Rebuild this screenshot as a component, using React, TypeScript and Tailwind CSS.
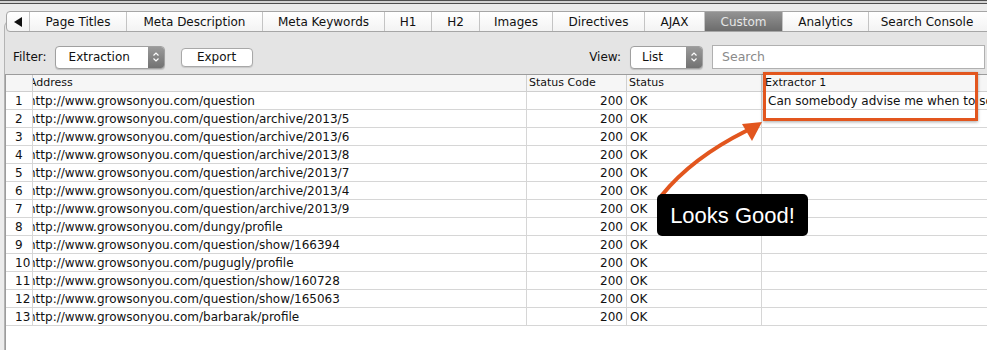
import React from "react";

const tabs = [
  { label: "Page Titles", w: "w-[97px]" },
  { label: "Meta Description", w: "w-[136px]" },
  { label: "Meta Keywords", w: "w-[122px]" },
  { label: "H1", w: "w-[47px]" },
  { label: "H2", w: "w-[48px]" },
  { label: "Images", w: "w-[73px]" },
  { label: "Directives", w: "w-[92px]" },
  { label: "AJAX", w: "w-[60px]" },
  { label: "Custom", w: "w-[78px]", active: true },
  { label: "Analytics", w: "w-[86px]" },
  { label: "Search Console", w: "w-[116px]", last: true },
];

const paths = [
  "question",
  "question/archive/2013/5",
  "question/archive/2013/6",
  "question/archive/2013/8",
  "question/archive/2013/7",
  "question/archive/2013/4",
  "question/archive/2013/9",
  "dungy/profile",
  "question/show/166394",
  "pugugly/profile",
  "question/show/160728",
  "question/show/165063",
  "barbarak/profile",
];

function Stepper() {
  return (
    <div className="w-[16px] h-full flex items-center justify-center bg-linear-to-b from-[#9a9a9a] to-[#727272] rounded-r-[3px]">
      <svg width="8" height="12" viewBox="0 0 8 12">
        <path d="M1.5 4.5 L4 2 L6.5 4.5" fill="none" stroke="#fff" strokeWidth="1.2" />
        <path d="M1.5 7.5 L4 10 L6.5 7.5" fill="none" stroke="#fff" strokeWidth="1.2" />
      </svg>
    </div>
  );
}

export default function App() {
  return (
    <div className="relative w-[987px] h-[350px] overflow-hidden bg-[#ececec] font-['DejaVu_Sans',sans-serif] text-[#111]">
      {/* window top edge */}
      <div className="h-[4px] border-y border-[#505050] bg-[#d4d4d4]" />

      {/* tab strip */}
      <div className="relative z-10 mt-[7px] ml-[6px] flex h-[21px] w-[985px] border border-[#a6a6a6] rounded-l-[4px] bg-linear-to-b from-white to-[#f3f3f3] text-[12px]">
        <div className="w-[23px] flex items-center justify-center border-r border-[#c4c4c4]">
          <svg width="8" height="10" viewBox="0 0 8 10">
            <path d="M8 0 L0 5 L8 10 Z" fill="#111" />
          </svg>
        </div>
        {tabs.map((t) => (
          <div
            key={t.label}
            className={`${t.w} flex items-center justify-center whitespace-nowrap ${t.last ? "" : "border-r border-[#c4c4c4]"} ${
              t.active ? "bg-linear-to-b from-[#939393] to-[#6c6c6c] text-[#e6e6e6]" : ""
            }`}
          >
            {t.label}
          </div>
        ))}
      </div>

      {/* tab panel */}
      <div className="mt-[-11px] ml-[4px] mr-[-10px] h-[330px] border-l border-t border-[#b4b4b4] rounded-tl-[6px] bg-[#e4e4e4] flex flex-col">
        {/* toolbar */}
        <div className="mt-[23px] h-[24px] flex items-center pl-[8px] pr-[12px] text-[12px]">
          <span>Filter:</span>
          <div className="ml-[8px] w-[110px] h-[23px] flex items-stretch bg-white border border-[#a0a0a0] rounded-[4px] shadow-[0_1px_1px_rgba(0,0,0,0.15)]">
            <span className="flex-1 flex items-center pl-[13px]">Extraction</span>
            <Stepper />
          </div>
          <button className="ml-[16px] w-[72px] h-[19px] flex items-center justify-center bg-white border border-[#a8a8a8] rounded-[4px] shadow-[0_1px_1px_rgba(0,0,0,0.12)]">
            Export
          </button>
          <span className="ml-auto">View:</span>
          <div className="ml-[9px] w-[73px] h-[23px] flex items-stretch bg-white border border-[#a0a0a0] rounded-[4px] shadow-[0_1px_1px_rgba(0,0,0,0.15)]">
            <span className="flex-1 flex items-center pl-[11px]">List</span>
            <Stepper />
          </div>
          <div className="ml-[9px] w-[273px] h-[24px] flex items-center pl-[9px] bg-white border border-[#b0b0b0] text-[#8a8a8a] text-[12.5px]">
            Search
          </div>
        </div>

        {/* table */}
        <div className="mt-[5px] flex-1 bg-white border-l border-t border-[#9c9c9c]">
          <div className="grid grid-cols-[27px_494px_100px_135px_1fr] h-[17px] border-b border-[#cfcfcf] bg-[#f6f6f6] text-[11px]">
            <div className="border-r border-[#d0d0d0]" />
            <div className="border-r border-[#d0d0d0] overflow-hidden flex items-center">
              <span className="ml-[-4px] whitespace-nowrap">Address</span>
            </div>
            <div className="border-r border-[#d0d0d0] flex items-center pl-[2px]">Status Code</div>
            <div className="border-r border-[#d0d0d0] flex items-center pl-[2px]">Status</div>
            <div className="flex items-center pl-[3px]">Extractor 1</div>
          </div>
          {paths.map((p, i) => (
            <div
              key={i}
              className="grid grid-cols-[27px_494px_100px_135px_1fr] h-[18px] border-b border-[#d6d6d6] text-[12px]"
            >
              <div className="border-r border-[#d6d6d6] flex items-center pl-[9px]">{i + 1}</div>
              <div className="border-r border-[#d6d6d6] overflow-hidden flex items-center">
                <span className="ml-[-5px] whitespace-nowrap">http://www.growsonyou.com/{p}</span>
              </div>
              <div className="border-r border-[#d6d6d6] flex items-center justify-end pr-[3px]">200</div>
              <div className="border-r border-[#d6d6d6] flex items-center pl-[3px]">OK</div>
              <div className="overflow-hidden flex items-center pl-[6px] whitespace-nowrap">
                {i === 0 ? "Can somebody advise me when to sow tomatoes?" : ""}
              </div>
            </div>
          ))}
        </div>
      </div>

      {/* annotation overlay */}
      <div className="absolute left-[763px] top-[72px] w-[215px] h-[49px] border-[3px] border-[#e2561e] shadow-[0_1px_3px_rgba(0,0,0,0.35)]" />
      <svg className="absolute left-0 top-0 pointer-events-none" width="987" height="350">
        <path d="M662 195 Q692 158 746 131" fill="none" stroke="#e2561e" strokeWidth="4" strokeLinecap="round" />
        <path d="M762 122 L742 124 L752 141 Z" fill="#e2561e" />
      </svg>
      <div className="absolute left-[657px] top-[194px] w-[151px] h-[42px] rounded-[5px] bg-black text-white flex items-center justify-center font-['Liberation_Sans',sans-serif] text-[22px]">
        Looks Good!
      </div>
    </div>
  );
}
